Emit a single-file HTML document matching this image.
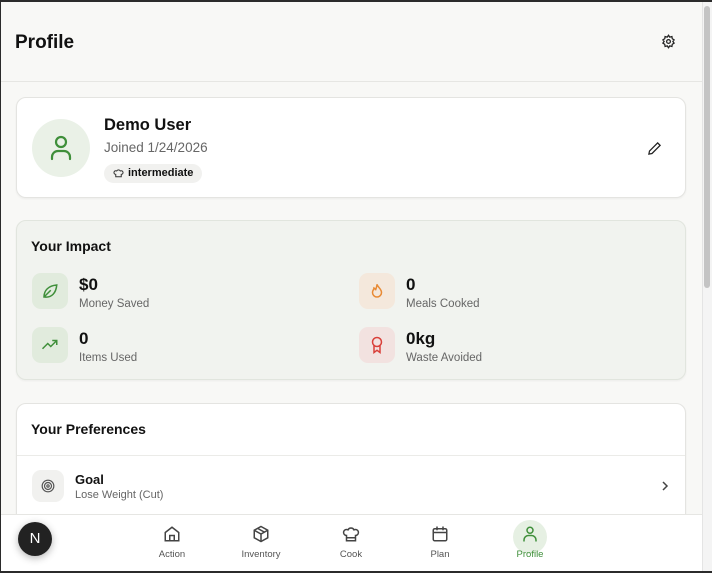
<!DOCTYPE html>
<html><head><meta charset="utf-8"><style>
*{box-sizing:border-box;margin:0;padding:0}
body{width:712px;height:573px;overflow:hidden;background:#2b2b2b;font-family:"Liberation Sans",sans-serif;color:#111}
.frame{position:absolute;left:1px;top:2px;width:711px;height:569px;background:#f8f8f6;overflow:hidden}
.sb{position:absolute;left:701px;top:0;width:10px;height:569px;background:#f4f4f4;border-left:1px solid #e4e4e4}
.thumb{position:absolute;left:703px;top:4px;width:6px;height:282px;background:#c4c4c4;border-radius:3px}
.hdr{position:absolute;left:0;top:0;width:701px;height:80px;border-bottom:1px solid #e6e6e3}
.hdr h1{position:absolute;left:14px;top:30px;font-size:19px;font-weight:bold}
.card{position:absolute;left:15px;width:670px;border:1px solid #e4e4e1;border-radius:10px;background:#fff;box-shadow:0 1px 2px rgba(0,0,0,.05)}
.ic{position:absolute;border-radius:9px;display:flex;align-items:center;justify-content:center}
.val{position:absolute;font-size:17px;font-weight:bold}
.lbl{position:absolute;font-size:11.5px;color:#666}
.nav{position:absolute;left:0;top:512px;width:701px;height:57px;background:#fff;border-top:1px solid #e6e6e3}
.ni{position:absolute;top:0;width:60px;text-align:center;font-size:9.5px;color:#555}
.ni svg{display:block;margin:10px auto 6px}
</style></head><body><div class="frame">
<div class="hdr"><h1>Profile</h1>
<svg style="position:absolute;left:660px;top:32px" width="15" height="15" viewBox="0 0 24 24" fill="none" stroke="#222" stroke-width="2"><circle cx="12" cy="12" r="3"/><path d="M12 2l2 3 3.5-1 .5 3.5 3 2-2 2.5 2 2.5-3 2-.5 3.5-3.5-1-2 3-2-3-3.5 1-.5-3.5-3-2 2-2.5-2-2.5 3-2 .5-3.5 3.5 1z"/></svg></div>

<div class="card" style="top:95px;height:101px">
<div style="position:absolute;left:15px;top:21px;width:58px;height:58px;border-radius:50%;background:#eaf1e7"></div>
<svg style="position:absolute;left:32px;top:37px" width="24" height="26" viewBox="0 0 24 26" fill="none" stroke="#3f8f3a" stroke-width="2.2" stroke-linecap="round"><circle cx="12" cy="7" r="5"/><path d="M3 24v-2a6 6 0 0 1 6-6h6a6 6 0 0 1 6 6v2"/></svg>
<div style="position:absolute;left:87px;top:18px;font-size:16.5px;font-weight:bold">Demo User</div>
<div style="position:absolute;left:87px;top:42px;font-size:13.5px;color:#666">Joined 1/24/2026</div>
<div style="position:absolute;left:87px;top:66px;height:19px;padding:0 9px 0 24px;border-radius:10px;background:#f1f1ef;font-size:11px;font-weight:bold;line-height:19px">intermediate
<svg style="position:absolute;left:9px;top:4px" width="11" height="11" viewBox="0 0 24 24" fill="none" stroke="#333" stroke-width="2.2"><path d="M6 14a4 4 0 1 1 2-7.5 4.5 4.5 0 0 1 8 0A4 4 0 1 1 18 14v5H6z"/></svg></div>
<svg style="position:absolute;left:630px;top:43px" width="15" height="15" viewBox="0 0 24 24" fill="none" stroke="#222" stroke-width="2"><path d="M17 3l4 4L8 20l-5 1 1-5z"/></svg>
</div>

<div class="card" style="top:218px;height:160px;background:#f1f3ef;border-color:#e1e5de">
<div style="position:absolute;left:14px;top:17px;font-size:14px;font-weight:bold">Your Impact</div>
<div class="ic" style="left:15px;top:52px;width:36px;height:36px;background:#e1ebdd"><svg width="18" height="18" viewBox="0 0 24 24" fill="none" stroke="#3f8f3a" stroke-width="2"><path d="M4 20c0-9 6-15 17-16-1 11-7 17-16 16zM4 20l9-9"/></svg></div>
<div class="val" style="left:62px;top:54px">$0</div><div class="lbl" style="left:62px;top:77px">Money Saved</div>
<div class="ic" style="left:15px;top:106px;width:36px;height:36px;background:#e1ebdd"><svg width="18" height="18" viewBox="0 0 24 24" fill="none" stroke="#3f8f3a" stroke-width="2"><path d="M2 17l7-7 4 4 8-8M15 6h6v6"/></svg></div>
<div class="val" style="left:62px;top:108px">0</div><div class="lbl" style="left:62px;top:131px">Items Used</div>
<div class="ic" style="left:342px;top:52px;width:36px;height:36px;background:#f4e8dc"><svg width="18" height="18" viewBox="0 0 24 24" fill="none" stroke="#e88a35" stroke-width="2"><path d="M12 3c1 4 6 6 6 11a6 6 0 0 1-12 0c0-3 2-4 2-6 2 1 2 3 2 3 1-3 2-5 2-8z"/></svg></div>
<div class="val" style="left:389px;top:54px">0</div><div class="lbl" style="left:389px;top:77px">Meals Cooked</div>
<div class="ic" style="left:342px;top:106px;width:36px;height:36px;background:#f2e2e0"><svg width="18" height="18" viewBox="0 0 24 24" fill="none" stroke="#d9403a" stroke-width="2"><circle cx="12" cy="8" r="6"/><path d="M8 13v9l4-3 4 3v-9"/></svg></div>
<div class="val" style="left:389px;top:108px">0kg</div><div class="lbl" style="left:389px;top:131px">Waste Avoided</div>
</div>

<div class="card" style="top:401px;height:140px">
<div style="position:absolute;left:14px;top:17px;font-size:14px;font-weight:bold">Your Preferences</div>
<div style="position:absolute;left:0;top:51px;width:668px;border-top:1px solid #ebebe8"></div>
<div class="ic" style="left:15px;top:66px;width:32px;height:32px;background:#f1f1ef"><svg width="14" height="14" viewBox="0 0 24 24" fill="none" stroke="#555" stroke-width="2"><circle cx="12" cy="12" r="10"/><circle cx="12" cy="12" r="6"/><circle cx="12" cy="12" r="2"/></svg></div>
<div style="position:absolute;left:58px;top:68px;font-size:13px;font-weight:bold">Goal</div>
<div class="lbl" style="left:58px;top:85px;font-size:11px">Lose Weight (Cut)</div>
<svg style="position:absolute;left:643px;top:76px" width="10" height="12" viewBox="0 0 10 12" fill="none" stroke="#444" stroke-width="1.5"><path d="M3 2l4 4-4 4"/></svg>
</div>

<div class="nav">
<div style="position:absolute;left:17px;top:7px;width:34px;height:34px;border-radius:50%;background:#222;box-shadow:0 2px 8px rgba(0,0,0,.3);color:#fff;font-size:15px;text-align:center;line-height:34px">N</div>
<div class="ni" style="left:141px"><svg width="18" height="18" viewBox="0 0 24 24" fill="none" stroke="#444" stroke-width="2"><path d="M3 10l9-7 9 7v11H3z"/><path d="M9 21v-7h6v7"/></svg>Action</div>
<div class="ni" style="left:230px"><svg width="18" height="18" viewBox="0 0 24 24" fill="none" stroke="#444" stroke-width="2"><path d="M12 2l9 5v10l-9 5-9-5V7z"/><path d="M3 7l9 5 9-5M12 12v10M7.5 4.5l9 5"/></svg>Inventory</div>
<div class="ni" style="left:320px"><svg width="18" height="18" viewBox="0 0 24 24" fill="none" stroke="#444" stroke-width="2"><path d="M6 14a4 4 0 1 1 2-7.5 4.5 4.5 0 0 1 8 0A4 4 0 1 1 18 14v7H6zM6 17h12"/></svg>Cook</div>
<div class="ni" style="left:409px"><svg width="18" height="18" viewBox="0 0 24 24" fill="none" stroke="#444" stroke-width="2"><rect x="3" y="5" width="18" height="16" rx="2"/><path d="M3 10h18M8 2v5M16 2v5"/></svg>Plan</div>
<div style="position:absolute;left:512px;top:5px;width:34px;height:34px;border-radius:50%;background:#e6f0e3"></div>
<div class="ni" style="left:499px;color:#3f8f3a"><svg width="18" height="18" viewBox="0 0 24 24" fill="none" stroke="#3f8f3a" stroke-width="2"><circle cx="12" cy="7" r="4"/><path d="M4 22v-2a6 6 0 0 1 6-6h4a6 6 0 0 1 6 6v2"/></svg>Profile</div>
</div>
<div class="sb"></div><div class="thumb"></div>
</div></body></html>
